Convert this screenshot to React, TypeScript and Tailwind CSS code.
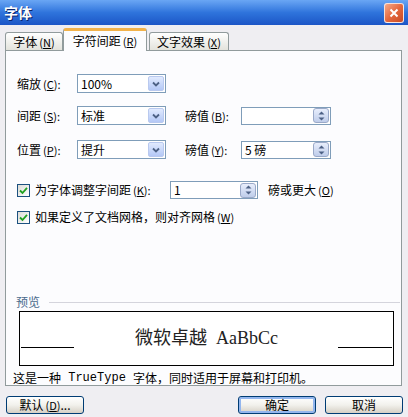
const ui = { fontFamily: '"Noto Sans CJK SC", "DejaVu Sans", sans-serif' };

function ComboArrow() {
  return (
    <div className="w-[16px] h-[15px] rounded-[2px] border border-[#b9c9ef] bg-gradient-to-b from-[#e1eafe] to-[#b4c8f6] flex items-center justify-center">
      <svg width="8" height="6" viewBox="0 0 8 6">
        <path d="M1 1.5 L4 4.5 L7 1.5" stroke="#4d6185" strokeWidth="1.8" fill="none" />
      </svg>
    </div>
  );
}

function Spinner() {
  return (
    <div className="w-[16px] h-[15px] rounded-[3px] border border-[#9aa9c8] bg-gradient-to-b from-[#e8eefc] to-[#bfcdea] flex flex-col items-center justify-center gap-[2px]">
      <svg width="7" height="4" viewBox="0 0 7 4">
        <path d="M0.5 3.5 L3.5 0.5 L6.5 3.5 Z" fill="#4d6185" />
      </svg>
      <svg width="7" height="4" viewBox="0 0 7 4">
        <path d="M0.5 0.5 L3.5 3.5 L6.5 0.5 Z" fill="#4d6185" />
      </svg>
    </div>
  );
}

function Combo({ value }: { value: string }) {
  return (
    <div className="w-[89px] h-[19px] border border-[#7f9db9] bg-white flex items-center justify-between pl-[3px] pr-[1px]">
      <span className="text-[12px] text-black leading-none">{value}</span>
      <ComboArrow />
    </div>
  );
}

function SpinBox({ value, w }: { value: string; w: string }) {
  return (
    <div className={`${w} h-[18px] border border-[#7f9db9] bg-white flex items-center justify-between pl-[3px] pr-[1px]`}>
      <span className="text-[12px] text-black leading-none">{value}</span>
      <Spinner />
    </div>
  );
}

function Check() {
  return (
    <div className="w-[13px] h-[13px] border border-[#1c5180] bg-gradient-to-br from-[#dcdcd7] to-white flex items-center justify-center">
      <svg width="9" height="9" viewBox="0 0 9 9">
        <path d="M1 4.5 L3.5 7 L8 1.8" stroke="#21a121" strokeWidth="1.8" fill="none" />
      </svg>
    </div>
  );
}

// label with an underlined access key, like "缩放(C):"
function Label({ text, k, colon, w }: { text: string; k: string; colon?: boolean; w?: string }) {
  return (
    <span className={`${w ?? ""} whitespace-nowrap`}>
      {text}
      <span className="text-[11px] ml-[2px]">
        (<span className="underline">{k}</span>){colon ? ":" : ""}
      </span>
    </span>
  );
}

function XpButton({ children, primary }: { children: React.ReactNode; primary?: boolean }) {
  return (
    <div
      className={`w-[78px] h-[18px] rounded-[3px] border border-[#003c74] flex items-center justify-center text-[12px] text-black bg-gradient-to-b from-white via-[#f2f1ec] to-[#d6d0c5] ${
        primary ? "shadow-[inset_0_0_0_2px_#93b6ee]" : ""
      }`}
    >
      {children}
    </div>
  );
}

export default function App() {
  return (
    <div className="w-[408px] h-[417px] bg-[#efeef2] flex flex-col overflow-hidden" style={ui}>
      {/* title bar */}
      <div className="h-[25px] bg-gradient-to-b from-[#6aa6f4] via-[#2f74dc] to-[#1c55c6] flex items-center justify-between pl-[4px] pr-[4px]">
        <span className="text-white font-bold text-[14px] [text-shadow:1px_1px_0_#0a246a]">字体</span>
        <div className="w-[20px] h-[20px] rounded-[3px] border border-white/80 bg-gradient-to-br from-[#f4a888] via-[#e4683e] to-[#c84a24] flex items-center justify-center">
          <svg width="10" height="10" viewBox="0 0 10 10">
            <path d="M1.5 1.5 L8.5 8.5 M8.5 1.5 L1.5 8.5" stroke="white" strokeWidth="2" />
          </svg>
        </div>
      </div>

      {/* tabs */}
      <div className="h-[25px] flex items-end pl-[5px] relative z-10 text-[12px] text-black">
        <div className="w-[58px] h-[18px] border border-b-0 border-[#919b9c] rounded-t-[3px] bg-gradient-to-b from-white to-[#e3e3dc] flex items-center justify-center">
          <Label text="字体" k="N" />
        </div>
        <div className="w-[84px] h-[23px] -mb-[1px] border border-b-0 border-[#919b9c] border-t-[3px] border-t-[#f2b24a] rounded-t-[3px] bg-[#fcfcfe] flex items-center justify-center">
          <Label text="字符间距" k="R" />
        </div>
        <div className="ml-[2px] w-[80px] h-[18px] border border-b-0 border-[#919b9c] rounded-t-[3px] bg-gradient-to-b from-white to-[#e3e3dc] flex items-center justify-center">
          <Label text="文字效果" k="X" />
        </div>
      </div>

      {/* panel */}
      <div className="ml-[5px] mr-[6px] h-[336px] border border-[#919b9c] bg-[#fcfcfe] flex flex-col text-[12px] text-black">
        <div className="mt-[23px] ml-[11px] flex items-center h-[19px]">
          <Label text="缩放" k="C" colon w="w-[60px]" />
          <Combo value="100%" />
        </div>
        <div className="mt-[13px] ml-[11px] flex items-center h-[19px]">
          <Label text="间距" k="S" colon w="w-[60px]" />
          <Combo value="标准" />
          <Label text="磅值" k="B" colon w="ml-[19px] w-[56px]" />
          <SpinBox value="" w="w-[90px]" />
        </div>
        <div className="mt-[15px] ml-[11px] flex items-center h-[19px]">
          <Label text="位置" k="P" colon w="w-[60px]" />
          <Combo value="提升" />
          <Label text="磅值" k="Y" colon w="ml-[19px] w-[56px]" />
          <SpinBox value="5 磅" w="w-[90px]" />
        </div>

        <div className="mt-[22px] ml-[11px] flex items-center h-[18px]">
          <Check />
          <Label text="为字体调整字间距" k="K" colon w="ml-[5px] w-[135px]" />
          <SpinBox value="1" w="w-[88px]" />
          <span className="ml-[10px]">
            <Label text="磅或更大" k="O" />
          </span>
        </div>
        <div className="mt-[9px] ml-[11px] flex items-center h-[18px]">
          <Check />
          <Label text="如果定义了文档网格，则对齐网格" k="W" w="ml-[5px]" />
        </div>

        <div className="mt-[69px] ml-[10px] mr-[1px] flex items-center h-[14px]">
          <span className="text-[#4a6a8c]">预览</span>
          <div className="flex-1 ml-[9px] h-px bg-[#d4d4dc]" />
        </div>
        <div className="mt-[2px] ml-[13px] w-[375px] h-[59px] border border-black bg-white flex items-center justify-center relative">
          <div className="absolute left-[1px] top-[35px] w-[53px] h-px bg-black" />
          <div className="absolute right-[1px] top-[35px] w-[54px] h-px bg-black" />
          <span className="text-[18px] text-[#222]" style={{ fontFamily: '"Liberation Serif", "Noto Sans CJK SC", serif' }}>
            微软卓越&nbsp; AaBbCc
          </span>
        </div>
        <div className="mt-[5px] ml-[7px] h-[14px] flex items-center">
          这是一种 <span style={{ fontFamily: '"Liberation Mono", monospace' }}>&nbsp;TrueType&nbsp;</span> 字体，同时适用于屏幕和打印机。
        </div>
      </div>

      {/* buttons */}
      <div className="mt-[10px] flex items-center pl-[6px] text-[12px]">
        <XpButton>
          <Label text="默认" k="D" />
          <span>...</span>
        </XpButton>
        <div className="ml-[154px]">
          <XpButton primary>确定</XpButton>
        </div>
        <div className="ml-[9px]">
          <XpButton>取消</XpButton>
        </div>
      </div>
    </div>
  );
}
